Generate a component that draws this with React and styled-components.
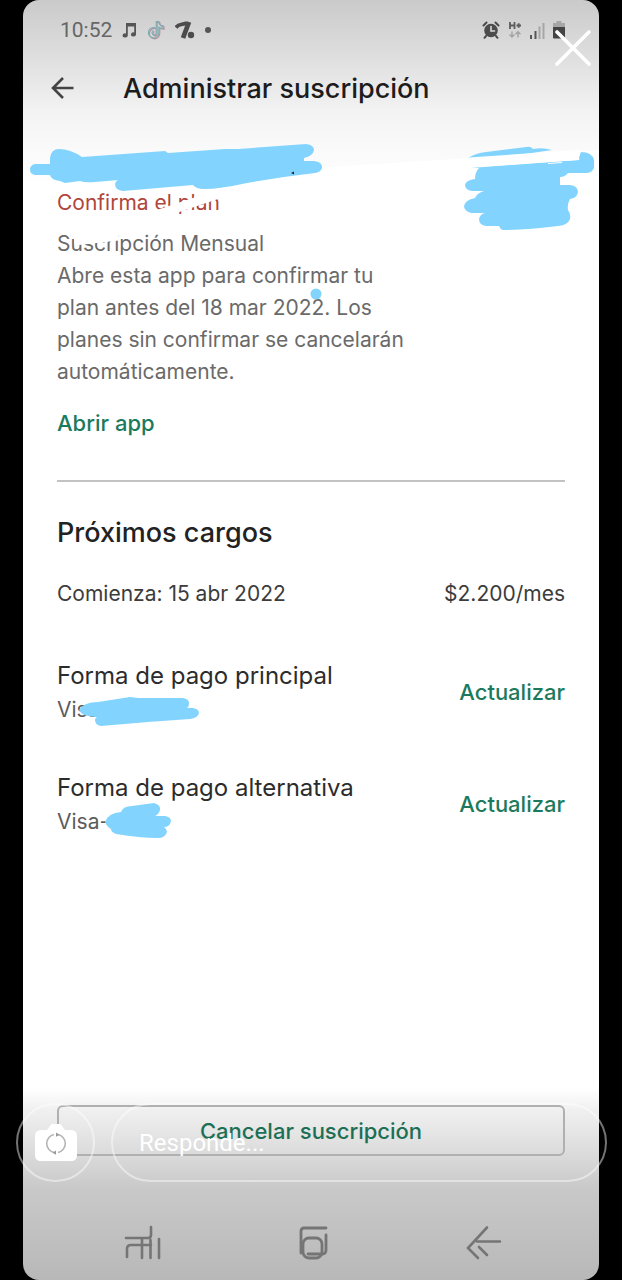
import React from "react";
import styled, { createGlobalStyle } from "styled-components";

const App = () => {
    return (
        <Page>
            <GlobalStyle />
            <Screen>
                <StatusBar>
                    <StatusGroup $gap="10px">
                        <Clock>10:52</Clock>
                        <MusicIcon />
                        <TiktokIcon />
                        <PercentIcon />
                        <Dot />
                    </StatusGroup>
                    <StatusGroup $gap="8px">
                        <AlarmIcon />
                        <NetworkIcon />
                        <SignalIcon />
                        <BatteryIcon />
                    </StatusGroup>
                </StatusBar>

                <Header>
                    <IconButton aria-label="Atrás">
                        <BackIcon />
                    </IconButton>
                    <Title>Administrar suscripción</Title>
                </Header>

                <Plan>
                    <Warning>Confirma el plan</Warning>
                    <PlanText>
                        Suscripción Mensual
                        <br />
                        Abre esta app para confirmar tu plan antes del 18 mar 2022. Los planes sin
                        confirmar se cancelarán automáticamente.
                    </PlanText>
                    <GreenLink href="#app">Abrir app</GreenLink>
                </Plan>

                <Charges>
                    <SectionTitle>Próximos cargos</SectionTitle>
                    <ChargeRow>
                        <span>Comienza: 15 abr 2022</span>
                        <span>$2.200/mes</span>
                    </ChargeRow>
                    <PaymentRow>
                        <div>
                            <PaymentName>Forma de pago principal</PaymentName>
                            <PaymentCard>Visa</PaymentCard>
                        </div>
                        <GreenButton>Actualizar</GreenButton>
                    </PaymentRow>
                    <PaymentRow>
                        <div>
                            <PaymentName>Forma de pago alternativa</PaymentName>
                            <PaymentCard>Visa-</PaymentCard>
                        </div>
                        <GreenButton>Actualizar</GreenButton>
                    </PaymentRow>
                </Charges>

                <CancelButton>Cancelar suscripción</CancelButton>

                <NavBar>
                    <IconButton aria-label="Recientes">
                        <RecentsIcon />
                    </IconButton>
                    <IconButton aria-label="Inicio">
                        <HomeIcon />
                    </IconButton>
                    <IconButton aria-label="Volver">
                        <NavBackIcon />
                    </IconButton>
                </NavBar>

                <Scribbles />
            </Screen>

            <CloseButton aria-label="Cerrar">
                <svg width="36" height="36" viewBox="0 0 36 36" fill="none" stroke="#fff" strokeWidth="3.6" strokeLinecap="round">
                    <path d="M2 2l32 32M34 2L2 34" />
                </svg>
            </CloseButton>
            <ReplyBar>
                <CameraButton aria-label="Cámara">
                    <CameraIcon />
                </CameraButton>
                <ReplyInput type="text" aria-label="Responde" placeholder="Responde..." />
            </ReplyBar>
        </Page>
    );
};

const MusicIcon = () => (
    <svg width="15" height="16" viewBox="0 0 15 16" fill="#555">
        <path d="M4 1h10v11.5a2.5 2 0 1 1-1.8-2V4.5H5.8v9a2.6 2 0 1 1-1.8-2z" />
    </svg>
);

const TiktokIcon = () => (
    <svg width="18" height="21" viewBox="0 0 19 21" fill="none" strokeWidth="1.2">
        <path d="M9.5 8.5a5.500 5.500 0 1 0 4 5.500V8c1 .8 2.500 1.200 4.500 1.200V6.500c-2.500 0-4.500-1.500-4.500-4.500h-2.800v12a2.200 2.200 0 1 1-2.500-2.200" stroke="#b58f9d" />
        <path d="M8.5 7.500a5.500 5.500 0 1 0 4 5.500V7c1 .8 2.500 1.200 4.500 1.200V5.500c-2.500 0-4.500-1.500-4.500-4.500H9.700v12a2.200 2.200 0 1 1-2.500-2.200" stroke="#7fadb2" />
    </svg>
);

const PercentIcon = () => (
    <svg width="20" height="18" viewBox="0 0 20 18" fill="none" stroke="#4c4c4c">
        <path d="M1 6.500q2-2.500 5-3t6-1.500" strokeWidth="3.8" />
        <path d="M14 1L8 17" strokeWidth="4.8" />
        <circle cx="16" cy="14" r="3.2" fill="#4c4c4c" stroke="none" />
    </svg>
);

const AlarmIcon = () => (
    <svg width="18" height="18" viewBox="0 0 18 18" fill="none" stroke="#4c4c4c" strokeWidth="2" strokeLinecap="round">
        <circle cx="9" cy="9.5" r="6.8" fill="#4c4c4c" stroke="none" />
        <path d="M1.500 4.500l3-3M16.500 4.500l-3-3M4 15l-1.500 1.800M14 15l1.500 1.800" />
        <path d="M9 5.500V10h3.500" stroke="#dadada" strokeWidth="1.6" />
    </svg>
);

const NetworkIcon = () => (
    <svg width="14" height="18" viewBox="0 0 14 18" fill="none" stroke="#5c5c5c" strokeWidth="1.8">
        <path d="M2 1v7M6.500 1v7M2 4.500h4.500M8.500 4.500H13M10.700 2.300v4.500" />
        <path d="M4 10.500V16M1.500 13.500L4 16l2.500-2.500M10 16.500V11M7.500 13.300L10 10.800l2.500 2.500" stroke="#a3a3a3" strokeWidth="1.4" />
    </svg>
);

const SignalIcon = () => (
    <svg width="15" height="17" viewBox="0 0 15 17">
        <path d="M0 13h2v4H0zM4.500 9h2v8h-2z" fill="#555" />
        <path d="M8.500 4.500h2V17h-2zM12.500 1h2v16h-2z" fill="#a6a6a6" />
    </svg>
);

const BatteryIcon = () => (
    <svg width="12" height="18" viewBox="0 0 12 18">
        <path d="M3.500 0h5v2H12v4H0V2h3.500z" fill="#a6a6a6" />
        <path d="M0 6h12v10.500q0 1-1 1H1q-1 0-1-1z" fill="#444" />
    </svg>
);

const BackIcon = () => (
    <svg width="24" height="24" viewBox="0 0 24 24" fill="none" stroke="#444" strokeWidth="2.6">
        <path d="M12 2L2 12l10 10M2 12h20.500" />
    </svg>
);

const RecentsIcon = () => (
    <svg width="38" height="36" viewBox="0 0 38 36" fill="none" stroke="#757575" strokeWidth="2.6" strokeLinecap="round">
        <path d="M2 13h22q3 0 3-3V2M3 32v-8q0-4 4-4h20M18 13v20M26.500 15v18M35 14v19" />
    </svg>
);

const HomeIcon = () => (
    <svg width="30" height="36" viewBox="0 0 30 36" fill="none" stroke="#757575" strokeWidth="2.8" strokeLinecap="round">
        <path d="M2 28V6q0-3 3-3h22M27 10v15q0 4-4 4H9" />
        <rect x="4" y="13" width="19" height="20" rx="6" />
    </svg>
);

const NavBackIcon = () => (
    <svg width="36" height="36" viewBox="0 0 36 36" fill="none" stroke="#757575" strokeWidth="2.6" strokeLinecap="round">
        <path d="M21 2.500L2 23l10 10M11 16.500h23M13 22l8 8" />
    </svg>
);

const CameraIcon = () => (
    <svg width="42" height="38" viewBox="0 0 42 38" fill="none">
        <path d="M6 6h6l3-4q1-2 3-2h6q2 0 3 2l3 4h6q6 0 6 6v19q0 6-6 6H6q-6 0-6-6V12q0-6 6-6z" fill="#fff" />
        <path d="M19 10.500a9.200 9.200 0 0 0 0 18M23 28.500a9.200 9.200 0 0 0 0-18" stroke="#b5b5b5" strokeWidth="1.6" />
        <path d="M21 8.500l3.500 2.300-3.500 2zM21 26.500l-3.500 2.300 3.500 2z" fill="#999" />
    </svg>
);

// hand-painted marks that hide the private data
const Scribbles = () => (
    <ScribbleLayer width="576" height="900" viewBox="23 0 576 900" fill="#82d4ff">
        <path d="M23 182L330 167L599 150V190H23z" fill="#fff" />
        <path d="M35 164H50V158Q51 149 59 149Q70 149 82 157L165 151L168 153L225 149H238L306 144Q314 145 314 150Q313 156 304 158V161H314Q322 162 322 167Q322 172 315 173Q280 177 247 183Q220 189 204 189Q196 189 193 185L123 191Q115 190 115 184Q116 180 119 180L95 182Q85 183 80 181L65 183L60 181Q51 180 50 175H35Q30 174 30 169.500T35 164z" />
        <path d="M291 173l3-1.500v3z" fill="#222" />
        <path d="M150 217L228 191" stroke="#fff" strokeWidth="9" />
        <path d="M74 239L118 234" stroke="#fff" strokeWidth="13" />
        <path d="M468 158Q476 153 486 152L526 147Q531 146 533 149Q543 147 552 150L470 162z" />
        <path d="M470 168L578 160L581 152Q592 152 594 160V168Q592 173 586 173H568Q565 177 560 177V185H570Q578 186 578 192Q577 198 570 199Q567 204 568 210Q571 214 570 219Q568 225 558 226Q528 230 503 230Q500 229 499 226H486Q479 225 479 219Q480 214 485 213H471Q464 211 464 206Q465 200 475 198Q477 193 484 191H472Q465 190 465 185Q466 180 475 179Q475 172 479 168z" />
        <path d="M462 163L579 155" stroke="#fff" strokeWidth="10" />
        <path d="M548 163l14-1v1l-14 1z" fill="#fff" />
        <circle cx="316" cy="294" r="5.5" />
        <path d="M79 710Q84 702 98 702L130 697L138 698H183Q189 699 189 703Q189 707 187 708H193Q199 709 199 713Q198 718 190 719L148 722L101 726Q95 725 95 720Q95 718 97 717Q82 717 79 710z" />
        <path d="M105 822Q108 813 121 812Q123 806 132 806L154 803Q161 805 160 810Q159 814 155 816H165Q171 817 171 821Q170 827 164 827Q167 829 167 832Q165 838 158 838Q140 838 116 834Q111 832 111 829Q107 827 105 822z" />
    </ScribbleLayer>
);

const GlobalStyle = createGlobalStyle`
    * {
        box-sizing: border-box;
    }
    body {
        margin: 0;
        background: #000;
        font-family: Inter, "Liberation Sans", sans-serif;
        font-size: 21px;
    }
    button, input {
        font: inherit;
    }
`;

const Page = styled.div`
    position: relative;
    min-height: 100vh;
    padding: 0 23px;
    display: flex;
`;

const Screen = styled.main`
    position: relative;
    flex: 1;
    display: flex;
    flex-direction: column;
    border-radius: 16px;
    overflow: hidden;
    background:
        linear-gradient(to bottom, #cacaca 0, #dedede 56px, #f3f3f3 112px, #fafafa 150px, #fdfdfd 176px, transparent 184px),
        linear-gradient(to top, #b8b8b8 0, #c9c9c9 92px, #dedede 132px, #f0f0f0 170px, #fff 192px);
`;

const StatusBar = styled.div`
    display: flex;
    justify-content: space-between;
    height: 60px;
    padding: 0 34px 0 37px;
    color: #666;
`;

const StatusGroup = styled.div`
    display: flex;
    align-items: center;
    gap: ${(props) => props.$gap};
`;

const Clock = styled.span`
    font-family: Roboto, sans-serif;
    font-size: 21px;
`;

const Dot = styled.i`
    width: 6px;
    height: 6px;
    border-radius: 50%;
    background: #555;
`;

const Header = styled.header`
    display: flex;
    align-items: center;
    gap: 48px;
    height: 56px;
    padding: 0 28px;
`;

const IconButton = styled.button`
    display: flex;
    padding: 0;
    border: 0;
    background: none;
    cursor: pointer;
`;

const Title = styled.h1`
    margin: 0;
    font-size: 27px;
    font-weight: 500;
    color: #1c1c1c;
`;

const Plan = styled.section`
    margin: 71px 34px 0;
    padding-bottom: 40px;
    border-bottom: 2px solid #c2c2c2;
    line-height: 32px;
`;

const Warning = styled.p`
    margin: 0 0 9px;
    color: #b0453c;
`;

const PlanText = styled.p`
    max-width: 356px;
    margin: 0 0 19px;
    color: #6a6a6a;
`;

const GreenLink = styled.a`
    color: #1c7a5c;
    font-size: 22px;
    font-weight: 500;
    text-decoration: none;
`;

const GreenButton = styled.button`
    padding: 0;
    border: 0;
    background: none;
    color: #1c7a5c;
    font-size: 22px;
    font-weight: 500;
    cursor: pointer;
`;

const Charges = styled.section`
    padding: 34px 34px 0;
`;

const SectionTitle = styled.h2`
    margin: 0 0 28px;
    font-size: 27px;
    line-height: 34px;
    font-weight: 500;
    color: #222;
`;

const ChargeRow = styled.div`
    display: flex;
    justify-content: space-between;
    margin-bottom: 48px;
    line-height: 32px;
    color: #3c3c3c;
`;

const PaymentRow = styled.div`
    display: flex;
    justify-content: space-between;
    align-items: center;
    margin-bottom: 44px;
`;

const PaymentName = styled.div`
    font-size: 24px;
    line-height: 36px;
    color: #2c2c2c;
`;

const PaymentCard = styled.div`
    line-height: 32px;
    color: #5c5c5c;
`;

const CancelButton = styled.button`
    height: 51px;
    margin: auto 34px 69px;
    border: 2px solid #b0b0b0;
    border-radius: 6px;
    background: none;
    color: #1c6f55;
    font-size: 22px;
    font-weight: 500;
    cursor: pointer;
`;

const NavBar = styled.nav`
    display: flex;
    justify-content: space-between;
    padding: 0 97px 19px 101px;
`;

const ScribbleLayer = styled.svg`
    position: absolute;
    top: 0;
    left: 0;
    pointer-events: none;
`;

const CloseButton = styled(IconButton)`
    position: absolute;
    top: 30px;
    right: 31px;
`;

const ReplyBar = styled.div`
    position: absolute;
    left: 16px;
    right: 15px;
    bottom: 98px;
    display: flex;
    gap: 16px;
`;

const CameraButton = styled.button`
    display: flex;
    align-items: center;
    justify-content: center;
    width: 79px;
    height: 79px;
    padding: 0;
    border: 2px solid rgba(255, 255, 255, 0.45);
    border-radius: 50%;
    background: none;
    cursor: pointer;
`;

const ReplyInput = styled.input`
    flex: 1;
    min-width: 0;
    padding: 0 26px;
    border: 2px solid rgba(255, 255, 255, 0.45);
    border-radius: 40px;
    background: none;
    color: #fff;
    font-family: Roboto, sans-serif;
    font-size: 24px;
    outline: none;

    &::placeholder {
        color: #fff;
        opacity: 1;
    }
`;

export default App;
